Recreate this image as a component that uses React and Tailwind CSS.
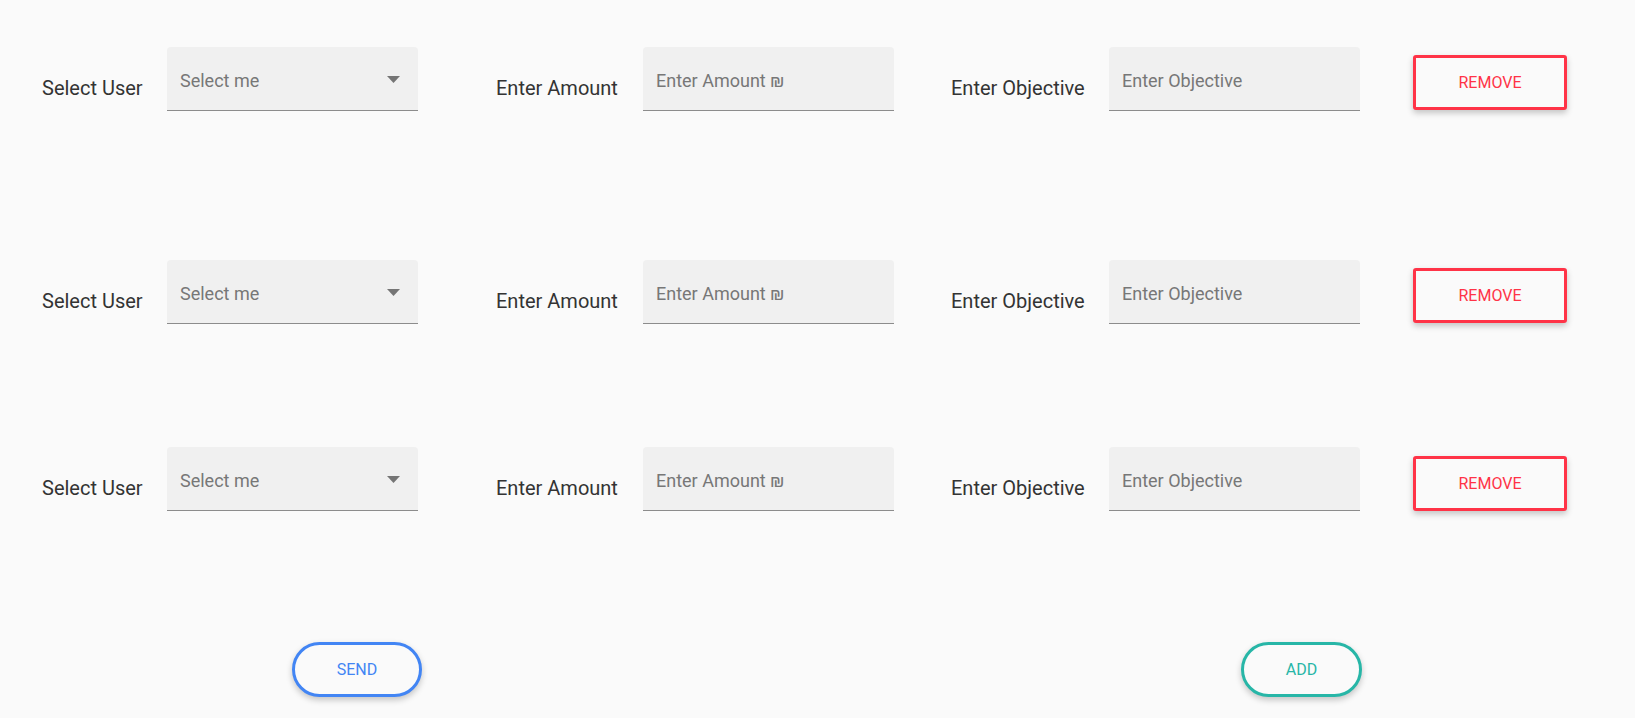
import { useState } from "react";

const rows = [
  { id: 1, after: "mb-[149px]", removeTop: "mt-[8px]" },
  { id: 2, after: "mb-[123px]", removeTop: "mt-[8px]" },
  { id: 3, after: "mb-[131px]", removeTop: "mt-[9px]" },
];

function ArrowDown() {
  return (
    <svg width="13" height="7" viewBox="0 0 13 7" className="mt-[7px]">
      <path d="M0 0 L13 0 L6.5 7 Z" fill="#757575" />
    </svg>
  );
}

function FieldBox({ placeholder, width, select }) {
  return (
    <div
      className={`${width} h-[64px] bg-[#f0f0f0] rounded-t-[4px] border-b border-[#8c8c8c] flex items-start justify-between pl-[13px] pr-[18px] pt-[22px]`}
    >
      <span className="text-[18px] leading-[24px] text-[#777777]">
        {placeholder}
      </span>
      {select && <ArrowDown />}
    </div>
  );
}

function Label({ text, width }) {
  return (
    <div
      className={`${width} shrink-0 mt-[29px] text-[20px] leading-[24px] text-[#333333]`}
    >
      {text}
    </div>
  );
}

export default function App() {
  const [items] = useState(rows);

  return (
    <div
      className="min-h-screen bg-[#fafafa] pt-[47px]"
      style={{ fontFamily: "Roboto, 'Liberation Sans', sans-serif" }}
    >
      {items.map((row) => (
        <div key={row.id} className={`flex items-start pl-[42px] ${row.after}`}>
          {/* Select user */}
          <div className="flex w-[454px] shrink-0">
            <Label text="Select User" width="w-[125px]" />
            <FieldBox placeholder="Select me" width="w-[251px]" select />
          </div>

          {/* Amount */}
          <div className="flex w-[455px] shrink-0">
            <Label text="Enter Amount" width="w-[147px]" />
            <FieldBox placeholder="Enter Amount ₪" width="w-[251px]" />
          </div>

          {/* Objective */}
          <div className="flex w-[462px] shrink-0">
            <Label text="Enter Objective" width="w-[158px]" />
            <FieldBox placeholder="Enter Objective" width="w-[251px]" />
          </div>

          <button
            className={`${row.removeTop} w-[154px] h-[55px] bg-[#fafafa] border-[3px] border-[#ff3347] rounded-[3px] text-[16px] text-[#ff3347] uppercase shadow-[0_3px_6px_rgba(0,0,0,0.22)]`}
          >
            Remove
          </button>
        </div>
      ))}

      <div className="flex items-start pl-[292px] gap-[819px]">
        <button className="w-[130px] h-[55px] bg-[#fafafa] border-[3px] border-[#4285f4] rounded-full text-[16px] text-[#4285f4] uppercase shadow-[0_3px_6px_rgba(0,0,0,0.22)]">
          Send
        </button>
        <button className="w-[121px] h-[55px] bg-[#fafafa] border-[3px] border-[#27b6a7] rounded-full text-[16px] text-[#27b6a7] uppercase shadow-[0_3px_6px_rgba(0,0,0,0.22)]">
          Add
        </button>
      </div>
    </div>
  );
}
